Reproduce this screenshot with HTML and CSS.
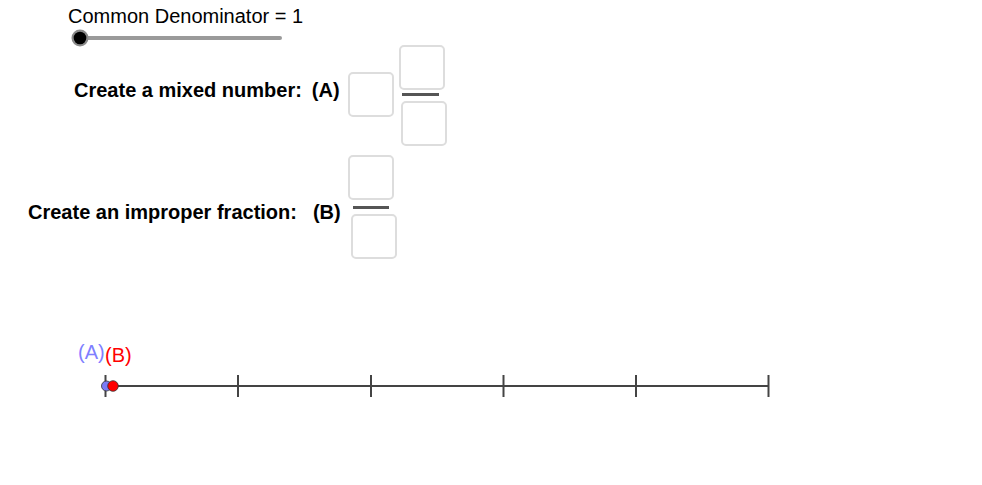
FILE: index.html
```html
<!DOCTYPE html>
<html>
<head>
<meta charset="utf-8">
<link rel="stylesheet" href="styles.css">
</head>
<body>
<div class="applet">
  <div class="slider-label">Common Denominator = 1</div>
  <svg class="slider" width="220" height="17" viewBox="0 0 220 17">
    <line x1="12" y1="10" x2="212" y2="10" stroke="#9a9a9a" stroke-width="4" stroke-linecap="round"/>
    <circle cx="12" cy="10" r="8.5" fill="#8a8a8a"/>
    <circle cx="12" cy="10" r="6.3" fill="#000"/>
  </svg>

  <div class="row row-a">
    <div class="label">Create a mixed number:<span class="tag tag-a">(A)</span></div>
    <div class="box whole"></div>
    <div class="frac frac-a">
      <div class="box num"></div>
      <div class="bar"></div>
      <div class="box den"></div>
    </div>
  </div>

  <div class="row row-b">
    <div class="label">Create an improper fraction:<span class="tag tag-b">(B)</span></div>
    <div class="frac frac-b">
      <div class="box num"></div>
      <div class="bar"></div>
      <div class="box den"></div>
    </div>
  </div>

  <svg class="numberline" width="982" height="70" viewBox="0 0 982 70">
    <text x="78" y="28" class="pt-label" fill="#7f7fff">(A)</text>
    <text x="105" y="31" class="pt-label" fill="#ff0000">(B)</text>
    <g stroke="#444444" stroke-width="2">
      <line x1="105" y1="55" x2="769" y2="55"/>
      <line x1="105.5" y1="44" x2="105.5" y2="66"/>
      <line x1="238" y1="44" x2="238" y2="66"/>
      <line x1="371" y1="44" x2="371" y2="66"/>
      <line x1="503.5" y1="44" x2="503.5" y2="66"/>
      <line x1="636" y1="44" x2="636" y2="66"/>
      <line x1="768.5" y1="44" x2="768.5" y2="66"/>
    </g>
    <circle cx="106.5" cy="55" r="5" fill="#7b7bf5" stroke="#333" stroke-width="0.8"/>
    <circle cx="113" cy="55" r="5.3" fill="#ff0000" stroke="#333" stroke-width="0.8"/>
  </svg>
</div>
</body>
</html>
```
FILE: styles.css
```css
html, body {
  margin: 0;
  padding: 0;
  background: #ffffff;
}

.applet {
  width: 982px;
  height: 485px;
  font-family: "Liberation Sans", Arial, sans-serif;
  color: #000;
  overflow: hidden;
}

.slider-label {
  padding: 5px 0 0 68px;
  font-size: 20px;
  line-height: 23px;
}

.slider {
  display: block;
  margin-left: 68px;
  overflow: visible;
}

.row {
  display: flex;
  align-items: flex-start;
}

.label {
  font-weight: bold;
  font-size: 20px;
  line-height: 23px;
  white-space: nowrap;
}

.tag {
  margin-left: 10px;
}

.row-a {
  padding-left: 74px;
}

.row-a .label {
  margin-top: 34px;
}

.row-b {
  margin-top: 9px;
  padding-left: 28px;
}

.row-b .label {
  margin-top: 46px;
}

.tag-b {
  margin-left: 16px;
}

.box {
  box-sizing: border-box;
  width: 46px;
  height: 45px;
  border: 2px solid #dddddd;
  border-radius: 5px;
  background: #fff;
}

.whole {
  margin-left: 8px;
  margin-top: 27px;
}

.frac {
  display: flex;
  flex-direction: column;
  align-items: flex-start;
}

.frac-a {
  margin-left: 5px;
}

.frac-a .bar {
  margin: 3px 0 0 3px;
  width: 37px;
}

.frac-a .den {
  margin: 5px 0 0 2px;
}

.frac-b {
  margin-left: 7px;
}

.frac-b .bar {
  margin: 6px 0 0 5px;
  width: 36px;
}

.frac-b .den {
  margin: 5px 0 0 3px;
}

.bar {
  height: 3px;
  background: #555555;
}

.numberline {
  display: block;
  margin-top: 72px;
  overflow: visible;
}

.pt-label {
  font-family: "Liberation Sans", Arial, sans-serif;
  font-size: 20px;
}
```
